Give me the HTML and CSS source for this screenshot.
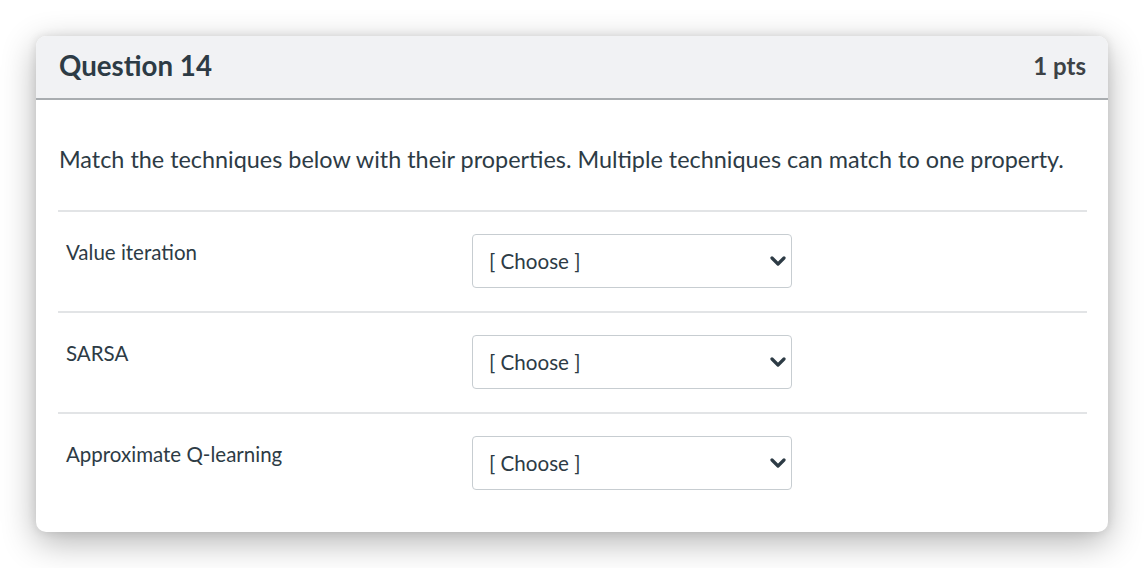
FILE: index.html
```html
<!DOCTYPE html>
<html>
<head>
<meta charset="utf-8">
<link rel="stylesheet" href="styles.css">
</head>
<body>
<div class="card">
  <div class="card-header">
    <h2 class="title">Question 14</h2>
    <span class="pts">1 pts</span>
  </div>
  <div class="card-body">
    <p class="prompt">Match the techniques below with their properties. Multiple techniques can match to one property.</p>
    <div class="answers">
      <div class="row">
        <div class="label">Value iteration</div>
        <div class="select"><span>[ Choose ]</span><svg class="chev" width="16" height="10" viewBox="0 0 16 10"><path d="M2 2 L8 8 L14 2" fill="none" stroke="#2d3b45" stroke-width="3.2" stroke-linecap="round" stroke-linejoin="round"/></svg></div>
      </div>
      <div class="row">
        <div class="label">SARSA</div>
        <div class="select"><span>[ Choose ]</span><svg class="chev" width="16" height="10" viewBox="0 0 16 10"><path d="M2 2 L8 8 L14 2" fill="none" stroke="#2d3b45" stroke-width="3.2" stroke-linecap="round" stroke-linejoin="round"/></svg></div>
      </div>
      <div class="row">
        <div class="label">Approximate Q-learning</div>
        <div class="select"><span>[ Choose ]</span><svg class="chev" width="16" height="10" viewBox="0 0 16 10"><path d="M2 2 L8 8 L14 2" fill="none" stroke="#2d3b45" stroke-width="3.2" stroke-linecap="round" stroke-linejoin="round"/></svg></div>
      </div>
    </div>
  </div>
</div>
</body>
</html>
```

FILE: styles.css
```css
html, body {
  margin: 0;
  padding: 0;
  background: #ffffff;
}
body {
  padding: 36px;
  font-family: Lato, "Open Sans", sans-serif;
  color: #2d3b45;
}
.card {
  width: 1072px;
  height: 496px;
  box-sizing: border-box;
  background: #fff;
  border-radius: 10px;
  overflow: hidden;
  box-shadow: 0 10px 34px rgba(0, 0, 0, 0.3), 0 0 10px rgba(0, 0, 0, 0.1);
}
.card-header {
  height: 64px;
  box-sizing: border-box;
  background: #f1f2f4;
  border-bottom: 2px solid #a9adb0;
  display: flex;
  align-items: center;
  justify-content: space-between;
  padding: 0 22px 4px 23px;
}
.title {
  margin: 0;
  font-size: 27.7px;
  font-weight: 700;
  color: #2d3b45;
}
.pts {
  font-size: 24px;
  font-weight: 700;
  color: #3d4246;
}
.card-body {
  padding: 0 21px 0 22px;
}
.prompt {
  margin: 0;
  padding: 43px 0 0 1px;
  font-size: 23.4px;
  line-height: 33px;
  height: 67px;
  box-sizing: content-box;
}
.answers {
  display: flex;
  flex-direction: column;
}
.row {
  display: flex;
  align-items: flex-start;
  border-top: 2px solid #e2e4e6;
  padding: 22px 0 23px 0;
}
.label {
  width: 406px;
  padding-left: 8px;
  padding-top: 4px;
  font-size: 20.5px;
  line-height: 28px;
}
.select {
  width: 320px;
  height: 54px;
  box-sizing: border-box;
  border: 1px solid #c7cdd1;
  border-radius: 4px;
  display: flex;
  align-items: center;
  justify-content: space-between;
  padding: 0 5px 0 16px;
  font-size: 20.6px;
}
.chev {
  display: block;
}
```
